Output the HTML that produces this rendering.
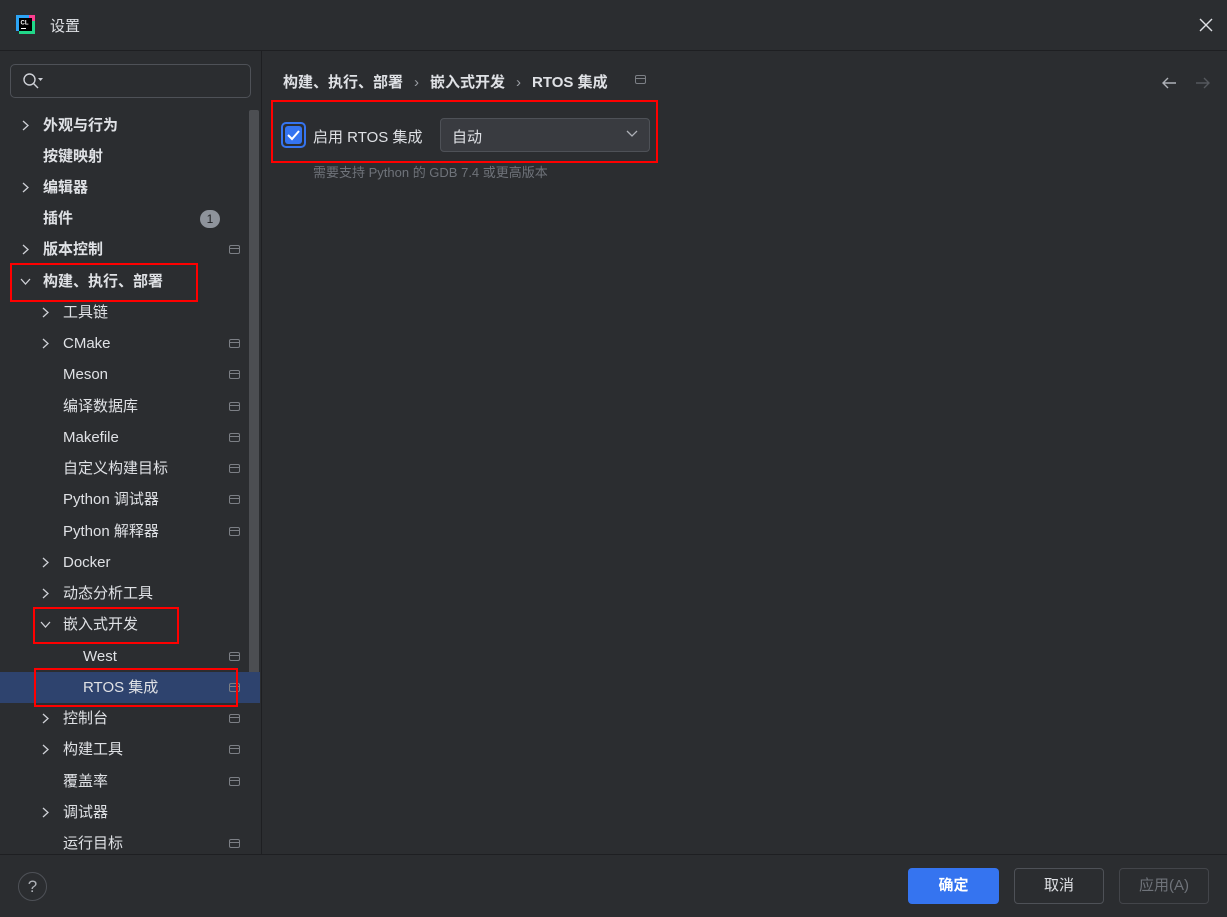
<!DOCTYPE html>
<html><head><meta charset="utf-8"><style>
*{margin:0;padding:0;box-sizing:border-box}
body{width:1227px;height:917px;background:#2b2d30;font-family:"Liberation Sans","Noto Sans CJK SC",sans-serif;color:#dfe1e5;font-size:15px;position:relative;overflow:hidden}
.abs{position:absolute}
.row{position:absolute;left:0;width:249px;height:31px;line-height:32px;white-space:nowrap}
.row .t{position:absolute}
.chev{position:absolute;top:10px;width:11px;height:11px}
.ic{position:absolute;left:229px;top:11px;width:11px;height:9px;border:1px solid #7c7f85;border-radius:2px}
.ic:after{content:"";position:absolute;left:0;right:0;top:2px;border-top:1px solid #7c7f85}
.red{position:absolute;border:2px solid #f00}
.sep{color:#9a9da3;font-weight:normal;margin:0 11px}
</style></head><body>
<svg class="abs" style="left:15px;top:14px" width="21" height="21" viewBox="0 0 21 21"><path d="M1 1h16v3H4v13H1z" fill="#2ca4f5"/><path d="M17 1h3v19H4v-3h13z" fill="#21d789"/><path d="M14 1h6v6h-3V4h-3z" fill="#fc3e8f"/><rect x="4" y="4" width="13" height="13" fill="#000"/><text x="5.5" y="10.5" font-size="6" fill="#fff" font-family="Liberation Sans" font-weight="bold">CL</text><rect x="6" y="14" width="5" height="1" fill="#fff"/></svg>
<div class="abs" style="left:50px;top:15px;font-size:15px">设置</div>
<svg class="abs" style="left:1199px;top:18px" width="14" height="14"><path d="M1 1L13 13M13 1L1 13" stroke="#dfe1e5" stroke-width="1.4"/></svg>
<div class="abs" style="left:0;top:50px;width:1227px;border-top:1px solid #1e1f22"></div>
<div class="abs" style="left:261px;top:51px;height:803px;border-left:1px solid #1e1f22"></div>
<div class="abs" style="left:10px;top:64px;width:241px;height:34px;border:1px solid #4e5157;border-radius:5px"></div>
<svg class="abs" style="left:22px;top:72px" width="22" height="18"><circle cx="7.5" cy="7.5" r="5.5" fill="none" stroke="#ced0d6" stroke-width="1.4"/><path d="M11.5 11.5L16 16" stroke="#ced0d6" stroke-width="1.4"/><path d="M16 6h5l-2.5 3z" fill="#ced0d6"/></svg>
<div class="abs" style="left:249px;top:110px;width:10px;height:588px;background:#4c4e52;border-radius:2px"></div>
<div class="abs" style="left:0;top:672px;width:260px;height:31px;background:#2e436e"></div>
<div class="row" style="top:110px"><svg class="chev" style="left:20px"><path d="M3 1l5 4.5-5 4.5" fill="none" stroke="#ced0d6" stroke-width="1.3"/></svg><b class="t" style="left:43px">外观与行为</b></div>
<div class="row" style="top:141px"><b class="t" style="left:43px">按键映射</b></div>
<div class="row" style="top:172px"><svg class="chev" style="left:20px"><path d="M3 1l5 4.5-5 4.5" fill="none" stroke="#ced0d6" stroke-width="1.3"/></svg><b class="t" style="left:43px">编辑器</b></div>
<div class="row" style="top:203px"><b class="t" style="left:43px">插件</b><div class="abs" style="left:200px;top:7px;width:20px;height:18px;border-radius:9px;background:#8e939b;color:#1e1f22;font-size:12px;line-height:18px;text-align:center">1</div></div>
<div class="row" style="top:234px"><svg class="chev" style="left:20px"><path d="M3 1l5 4.5-5 4.5" fill="none" stroke="#ced0d6" stroke-width="1.3"/></svg><b class="t" style="left:43px">版本控制</b><i class="ic"></i></div>
<div class="row" style="top:266px"><svg class="chev" style="left:20px"><path d="M1 3l4.5 5 4.5-5" fill="none" stroke="#ced0d6" stroke-width="1.3"/></svg><b class="t" style="left:43px">构建、执行、部署</b></div>
<div class="row" style="top:297px"><svg class="chev" style="left:40px"><path d="M3 1l5 4.5-5 4.5" fill="none" stroke="#ced0d6" stroke-width="1.3"/></svg><span class="t" style="left:63px">工具链</span></div>
<div class="row" style="top:328px"><svg class="chev" style="left:40px"><path d="M3 1l5 4.5-5 4.5" fill="none" stroke="#ced0d6" stroke-width="1.3"/></svg><span class="t" style="left:63px">CMake</span><i class="ic"></i></div>
<div class="row" style="top:359px"><span class="t" style="left:63px">Meson</span><i class="ic"></i></div>
<div class="row" style="top:391px"><span class="t" style="left:63px">编译数据库</span><i class="ic"></i></div>
<div class="row" style="top:422px"><span class="t" style="left:63px">Makefile</span><i class="ic"></i></div>
<div class="row" style="top:453px"><span class="t" style="left:63px">自定义构建目标</span><i class="ic"></i></div>
<div class="row" style="top:484px"><span class="t" style="left:63px">Python 调试器</span><i class="ic"></i></div>
<div class="row" style="top:516px"><span class="t" style="left:63px">Python 解释器</span><i class="ic"></i></div>
<div class="row" style="top:547px"><svg class="chev" style="left:40px"><path d="M3 1l5 4.5-5 4.5" fill="none" stroke="#ced0d6" stroke-width="1.3"/></svg><span class="t" style="left:63px">Docker</span></div>
<div class="row" style="top:578px"><svg class="chev" style="left:40px"><path d="M3 1l5 4.5-5 4.5" fill="none" stroke="#ced0d6" stroke-width="1.3"/></svg><span class="t" style="left:63px">动态分析工具</span></div>
<div class="row" style="top:609px"><svg class="chev" style="left:40px"><path d="M1 3l4.5 5 4.5-5" fill="none" stroke="#ced0d6" stroke-width="1.3"/></svg><span class="t" style="left:63px">嵌入式开发</span></div>
<div class="row" style="top:641px"><span class="t" style="left:83px">West</span><i class="ic"></i></div>
<div class="row" style="top:672px"><span class="t" style="left:83px">RTOS 集成</span><i class="ic"></i></div>
<div class="row" style="top:703px"><svg class="chev" style="left:40px"><path d="M3 1l5 4.5-5 4.5" fill="none" stroke="#ced0d6" stroke-width="1.3"/></svg><span class="t" style="left:63px">控制台</span><i class="ic"></i></div>
<div class="row" style="top:734px"><svg class="chev" style="left:40px"><path d="M3 1l5 4.5-5 4.5" fill="none" stroke="#ced0d6" stroke-width="1.3"/></svg><span class="t" style="left:63px">构建工具</span><i class="ic"></i></div>
<div class="row" style="top:766px"><span class="t" style="left:63px">覆盖率</span><i class="ic"></i></div>
<div class="row" style="top:797px"><svg class="chev" style="left:40px"><path d="M3 1l5 4.5-5 4.5" fill="none" stroke="#ced0d6" stroke-width="1.3"/></svg><span class="t" style="left:63px">调试器</span></div>
<div class="row" style="top:828px"><span class="t" style="left:63px">运行目标</span><i class="ic"></i></div>
<div class="red" style="left:10px;top:263px;width:188px;height:39px"></div>
<div class="red" style="left:33px;top:607px;width:146px;height:37px"></div>
<div class="red" style="left:34px;top:668px;width:204px;height:39px"></div>
<div class="abs" style="left:283px;top:71px;font-weight:bold;white-space:nowrap">构建、执行、部署<span class="sep">›</span>嵌入式开发<span class="sep">›</span>RTOS 集成</div>
<i class="ic" style="left:635px;top:75px"></i>
<svg class="abs" style="left:1161px;top:76px" width="16" height="14"><path d="M15 7H2M7 2L2 7l5 5" fill="none" stroke="#aeb1b7" stroke-width="1.4"/></svg>
<svg class="abs" style="left:1195px;top:76px" width="16" height="14"><path d="M1 7h13M9 2l5 5-5 5" fill="none" stroke="#55585d" stroke-width="1.4"/></svg>
<div class="red" style="left:271px;top:100px;width:387px;height:63px"></div>
<div class="abs" style="left:281px;top:122px;width:25px;height:26px;border:2px solid #3574f0;border-radius:5px;padding:2px"><div style="width:100%;height:100%;background:#3574f0;border-radius:3px"></div></div>
<svg class="abs" style="left:286px;top:128px" width="15" height="14"><path d="M2 7l4 4 7-8" fill="none" stroke="#fff" stroke-width="2"/></svg>
<div class="abs" style="left:313px;top:126px">启用 RTOS 集成</div>
<div class="abs" style="left:440px;top:118px;width:210px;height:34px;border:1px solid #4e5157;border-radius:4px;background:#393b40"></div>
<div class="abs" style="left:452px;top:126px">自动</div>
<svg class="abs" style="left:626px;top:130px" width="12" height="8"><path d="M1 1l5 5 5-5" fill="none" stroke="#aeb1b7" stroke-width="1.3"/></svg>
<div class="abs" style="left:313px;top:162px;font-size:13px;color:#6f737a">需要支持 Python 的 GDB 7.4 或更高版本</div>
<div class="abs" style="left:0;top:854px;width:1227px;border-top:1px solid #1e1f22"></div>
<div class="abs" style="left:18px;top:872px;width:29px;height:29px;border:1px solid #4e5157;border-radius:50%;text-align:center;line-height:27px;font-size:17px;color:#aeb1b7">?</div>
<div class="abs" style="left:908px;top:868px;width:91px;height:36px;background:#3574f0;border-radius:4px;text-align:center;line-height:36px;color:#fff;font-weight:bold">确定</div>
<div class="abs" style="left:1014px;top:868px;width:90px;height:36px;border:1px solid #4e5157;border-radius:4px;text-align:center;line-height:34px">取消</div>
<div class="abs" style="left:1119px;top:868px;width:90px;height:36px;border:1px solid #43454a;border-radius:4px;text-align:center;line-height:34px;color:#6f737a">应用(A)</div>
</body></html>
